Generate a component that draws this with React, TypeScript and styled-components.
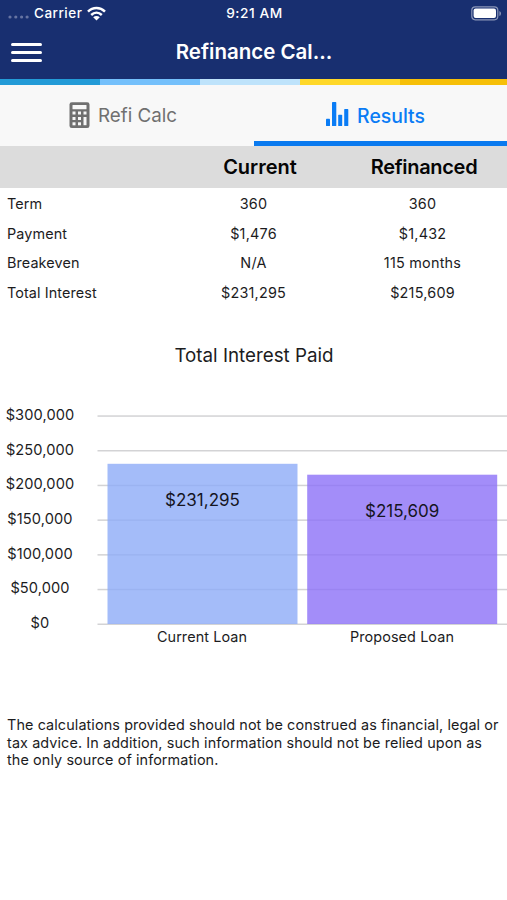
import React from "react";
import styled, { createGlobalStyle } from "styled-components";

const GlobalStyle = createGlobalStyle`
  * { box-sizing: border-box; }
  body {
    margin: 0;
    background: #fff;
    color: #1c1c1e;
    font-family: Inter, "Liberation Sans", sans-serif;
  }
`;

const Screen = styled.main`
  width: 507px;
  min-height: 900px;
  background: #fff;
  overflow: hidden;
`;

const Header = styled.header`
  background: #182f70;
  color: #fff;
  height: 79px;
`;

const StatusBar = styled.div`
  display: grid;
  grid-template-columns: 1fr auto 1fr;
  align-items: center;
  height: 26px;
  padding: 0 6px 0 8px;
  font-size: 13.5px;
  font-weight: 500;
`;

const Carrier = styled.div`
  display: flex;
  align-items: center;
`;

const CarrierName = styled.span`
  margin: 0 5px 0 5px;
  letter-spacing: 0.5px;
`;

const Clock = styled.span`
  letter-spacing: 0.55px;
  font-size: 13.7px;
`;

const Battery = styled.svg`
  justify-self: end;
`;

const NavBar = styled.div`
  display: grid;
  grid-template-columns: 48px 1fr 47px;
  align-items: center;
  height: 52px;
`;

const MenuButton = styled.button`
  display: flex;
  flex-direction: column;
  gap: 5px;
  padding: 1px 0 0 11px;
  border: 0;
  background: none;
`;

const MenuLine = styled.span`
  width: 31px;
  height: 3px;
  border-radius: 1.5px;
  background: #fff;
`;

const Title = styled.h1`
  margin: 0 0 2px;
  text-align: center;
  font-size: 20.5px;
  font-weight: 600;
`;

const Stripe = styled.div`
  display: grid;
  grid-template-columns: 100px 100px 100px 100px 107px;
  height: 6px;
`;

const StripePart = styled.span<{ $color: string }>`
  background: ${(p) => p.$color};
`;

const Tabs = styled.nav`
  display: grid;
  grid-template-columns: 254px 253px;
  height: 61px;
  background: #f8f8f8;
`;

const Tab = styled.button<{ $active?: boolean }>`
  display: flex;
  align-items: center;
  justify-content: center;
  gap: 8px;
  padding: ${(p) => (p.$active ? "5px 10px 0 0" : "0 8px 0 0")};
  border: 0;
  border-bottom: ${(p) => (p.$active ? "5px solid #0a7aef" : "0")};
  background: none;
  color: ${(p) => (p.$active ? "#0a7cf5" : "#707070")};
  font-family: inherit;
  font-size: ${(p) => (p.$active ? 19.4 : 18.8)}px;
  font-weight: ${(p) => (p.$active ? 500 : 400)};
`;

const Table = styled.table`
  width: 507px;
  table-layout: fixed;
  border-collapse: collapse;
`;

const Head = styled.th<{ $last?: boolean }>`
  height: 42px;
  padding: ${(p) => (p.$last ? "0 0 0 3px" : "0")};
  background: #dcdcdc;
  color: #050505;
  font-size: 20px;
  font-weight: 600;
  letter-spacing: ${(p) => (p.$last ? "-0.3px" : "0")};
  text-align: center;
`;

const Label = styled.td`
  height: 29.8px;
  padding: 1px 0 0 7px;
  font-size: 14.4px;
  letter-spacing: 0.1px;
`;

const Value = styled.td<{ $inset?: number }>`
  padding: 1px ${(p) => p.$inset ?? 0}px 0 0;
  text-align: center;
  font-size: 14.4px;
  letter-spacing: 0.22px;
`;

const ChartTitle = styled.h2`
  margin: 37px 0 0;
  height: 24px;
  padding-left: 1px;
  line-height: 24px;
  text-align: center;
  font-size: 18.8px;
  font-weight: 400;
`;

const Chart = styled.section`
  display: grid;
  grid-template-columns: 80px 17px 410px;
  margin-top: 30px;
`;

const Axis = styled.div`
  grid-column: 1;
  display: flex;
  flex-direction: column;
  text-align: center;
  font-size: 14.6px;
  letter-spacing: 0.1px;
`;

const Tick = styled.span`
  height: 34.6px;
  line-height: 34.6px;
`;

const Plot = styled.div`
  grid-column: 3;
`;

const Bars = styled.svg`
  display: block;
`;

const ValueText = styled.text`
  font-size: 17px;
  fill: #15151f;
  text-anchor: middle;
`;

const Categories = styled.div`
  display: grid;
  grid-template-columns: 190px 190px;
  column-gap: 10px;
  padding-left: 10px;
  line-height: 18px;
  text-align: center;
  font-size: 14.4px;
  letter-spacing: 0.1px;
`;

const Disclaimer = styled.p`
  margin: 70px 0 0;
  padding-left: 7px;
  font-size: 14.4px;
  line-height: 17.6px;
  letter-spacing: 0.1px;
  white-space: nowrap;
`;

const stripeColors = ["#239bd7", "#74c0fb", "#bee3fb", "#ffd829", "#f6bf08"];

const rows = [
  ["Term", "360", "360"],
  ["Payment", "$1,476", "$1,432"],
  ["Breakeven", "N/A", "115 months"],
  ["Total Interest", "$231,295", "$215,609"],
];

const ticks = ["$300,000", "$250,000", "$200,000", "$150,000", "$100,000", "$50,000", "$0"];

const bars = [
  { x: 10.5, top: 65.8, value: "$231,295", color: "#8dabf7" },
  { x: 210.2, top: 76.7, value: "$215,609", color: "#8c70f7" },
];

const SignalDots = () => (
  <svg width="21" height="12" viewBox="0 0 21 12" fill="#6674a2">
    {[2, 7.8, 13.6, 19.1].map((x) => (
      <circle key={x} cx={x} cy="10" r="1.6" />
    ))}
  </svg>
);

const WifiIcon = () => (
  <svg width="19" height="15" viewBox="0 0 19 15">
    <g fill="none" stroke="#fff" strokeWidth="2.5">
      <path d="M1 5.6C5.8.9 13.2.9 18 5.6" />
      <path d="M4.2 9C7.3 6.1 11.7 6.1 14.8 9" />
    </g>
    <path fill="#fff" d="M9.5 14.5 6.2 11.2C8.1 9.5 10.9 9.5 12.8 11.2Z" />
  </svg>
);

const CalculatorIcon = () => (
  <svg width="21" height="27" viewBox="0 0 21 27">
    <rect x="0.5" y="0.2" width="20" height="25.8" rx="2.3" fill="#707070" />
    <g fill="#f8f8f8" transform="translate(0 -0.5)">
      <rect x="3.5" y="3.6" width="14" height="4.2" rx="0.5" />
      <rect x="3.5" y="10" width="3" height="3" />
      <rect x="9" y="10" width="3" height="3" />
      <rect x="14.5" y="10" width="3" height="3" />
      <rect x="3.5" y="15.5" width="3" height="3" />
      <rect x="9" y="15.5" width="3" height="3" />
      <rect x="14.5" y="15.5" width="3" height="8.2" />
      <rect x="3.5" y="20.8" width="3" height="3" />
      <rect x="9" y="20.8" width="3" height="3" />
    </g>
  </svg>
);

const ChartIcon = () => (
  <svg width="23" height="27" viewBox="0 0 23 27" fill="#0a7cf5">
    <rect x="0" y="16.8" width="4" height="7.3" rx="0.7" />
    <rect x="6" y="0" width="4.3" height="24.1" rx="0.7" />
    <rect x="12.2" y="12.8" width="4" height="11.3" rx="0.7" />
    <rect x="18.2" y="7" width="4.1" height="17.1" rx="0.7" />
  </svg>
);

export default function App() {
  return (
    <Screen>
      <GlobalStyle />
      <Header>
        <StatusBar>
          <Carrier>
            <SignalDots />
            <CarrierName>Carrier</CarrierName>
            <WifiIcon />
          </Carrier>
          <Clock>9:21 AM</Clock>
          <Battery width="30" height="15" viewBox="0 0 30 15">
            <rect x="0.8" y="0.8" width="26" height="13" rx="3.5" fill="none" stroke="#8b97b8" strokeWidth="1.2" />
            <rect x="2.6" y="2.6" width="22.4" height="9.4" rx="2" fill="#fff" />
            <path d="M28.4 5v5Q30 9.5 30 7.5T28.4 5Z" fill="#8b97b8" />
          </Battery>
        </StatusBar>
        <NavBar>
          <MenuButton aria-label="Menu">
            <MenuLine />
            <MenuLine />
            <MenuLine />
          </MenuButton>
          <Title>Refinance Cal...</Title>
        </NavBar>
      </Header>
      <Stripe>
        {stripeColors.map((color) => (
          <StripePart key={color} $color={color} />
        ))}
      </Stripe>
      <Tabs>
        <Tab>
          <CalculatorIcon />
          Refi Calc
        </Tab>
        <Tab $active>
          <ChartIcon />
          Results
        </Tab>
      </Tabs>
      <Table>
        <colgroup>
          <col width="182" />
          <col width="156" />
          <col width="169" />
        </colgroup>
        <thead>
          <tr>
            <Head />
            <Head>Current</Head>
            <Head $last>Refinanced</Head>
          </tr>
        </thead>
        <tbody>
          {rows.map(([label, current, refinanced]) => (
            <tr key={label}>
              <Label>{label}</Label>
              <Value $inset={13}>{current}</Value>
              <Value>{refinanced}</Value>
            </tr>
          ))}
        </tbody>
      </Table>
      <ChartTitle>Total Interest Paid</ChartTitle>
      <Chart>
        <Axis>
          {ticks.map((tick) => (
            <Tick key={tick}>{tick}</Tick>
          ))}
        </Axis>
        <Plot>
          <Bars width="410" height="230" viewBox="0 0 410 230">
            {ticks.map((tick, i) => (
              <rect key={tick} x="0.5" y={17.3 + i * 34.7} width="409.5" height="1.5" fill="#d3d3d5" />
            ))}
            {bars.map((bar) => (
              <g key={bar.value}>
                <rect x={bar.x} y={bar.top} width="190" height={226 - bar.top} fill={bar.color} fillOpacity="0.8" />
                <ValueText x={bar.x + 95} y={bar.top + 42}>
                  {bar.value}
                </ValueText>
              </g>
            ))}
          </Bars>
          <Categories>
            <span>Current Loan</span>
            <span>Proposed Loan</span>
          </Categories>
        </Plot>
      </Chart>
      <Disclaimer>
        The calculations provided should not be construed as financial, legal or
        <br />
        tax advice. In addition, such information should not be relied upon as
        <br />
        the only source of information.
      </Disclaimer>
    </Screen>
  );
}
